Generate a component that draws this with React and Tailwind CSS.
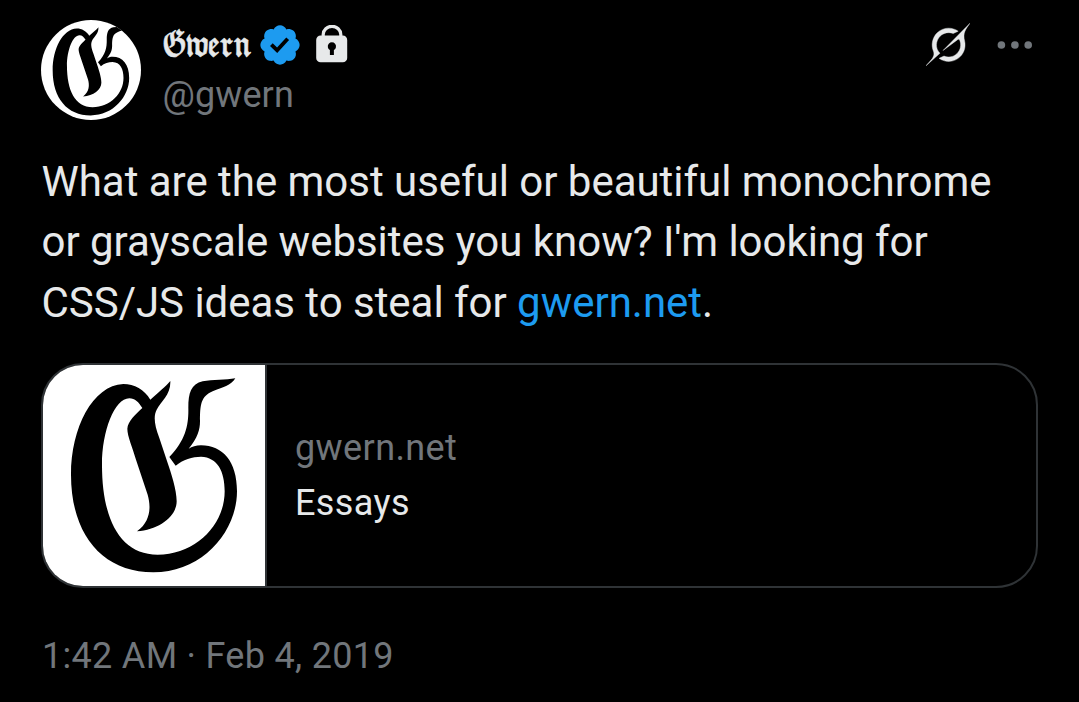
const G_PATH =
  "M343 125C325 95 295 78 262 78C170 82 105 210 105 350C105 530 200 643 352 643C500 643 603 520 603 400C603 310 560 262 495 262C480 262 468 266 458 272C485 240 492 215 492 190C492 140 495 115 530 100C560 88 585 82 598 61C570 67 530 64 500 70C465 78 457 105 457 150C458 200 450 245 400 297L419 323C440 305 470 296 495 296C545 298 566 340 566 400C566 500 480 590 365 590C250 590 198 480 198 320C198 220 235 121 280 121C297 121 308 133 319 150C300 168 275 190 274 212C274 235 290 270 300 305L335 410C345 445 345 490 303 520C370 515 422 475 422 430C422 395 405 345 395 315L370 240C355 200 352 175 362 155C375 130 405 110 403 69C390 85 365 105 343 125Z";

function GothicG({ viewBox, className }) {
  return (
    <svg viewBox={viewBox} className={className} preserveAspectRatio="none" aria-hidden="true">
      <path d={G_PATH} fill="#000" />
    </svg>
  );
}

function Verified() {
  return (
    <svg viewBox="0 0 22 22" className="size-[46px] shrink-0" fill="#1d9bf0" aria-hidden="true">
      <path d="M20.396 11c-.018-.646-.215-1.275-.57-1.816-.354-.54-.852-.972-1.438-1.246.223-.607.27-1.264.14-1.897-.131-.634-.437-1.218-.882-1.687-.47-.445-1.053-.75-1.687-.882-.633-.13-1.29-.083-1.897.14-.273-.587-.704-1.086-1.245-1.44S11.647 1.62 11 1.604c-.646.017-1.273.213-1.813.568s-.969.854-1.24 1.44c-.608-.223-1.267-.272-1.902-.14-.635.13-1.22.436-1.69.882-.445.47-.749 1.055-.878 1.688-.13.633-.08 1.29.144 1.896-.587.274-1.087.705-1.443 1.245-.356.54-.555 1.17-.574 1.817.02.647.218 1.276.574 1.817.356.54.856.972 1.443 1.245-.224.606-.274 1.263-.144 1.896.13.634.433 1.218.877 1.688.47.443 1.054.747 1.687.878.633.132 1.29.084 1.897-.136.274.586.705 1.084 1.246 1.439.54.354 1.17.551 1.816.569.647-.016 1.276-.213 1.817-.567s.972-.854 1.245-1.44c.604.239 1.266.296 1.903.164.636-.132 1.22-.447 1.68-.907.46-.46.776-1.044.908-1.681s.075-1.299-.165-1.903c.586-.274 1.084-.705 1.439-1.246.354-.54.551-1.17.569-1.816zM9.662 14.85l-3.429-3.428 1.293-1.302 2.072 2.072 4.4-4.794 1.347 1.246z" />
    </svg>
  );
}

function Lock() {
  return (
    <svg viewBox="0 0 32 38" className="ml-[13px] mb-[2px] h-[38px] w-8 shrink-0" aria-hidden="true">
      <path d="M7.2 12V9.5a8.8 8.2 0 0 1 17.6 0V12" fill="none" stroke="#e7e9ea" strokeWidth="3.2" />
      <path
        fillRule="evenodd"
        fill="#e7e9ea"
        d="M4.6 10.5h22.2a4.4 4.4 0 0 1 4.4 4.4v18a4.4 4.4 0 0 1-4.4 4.4H4.6a4.4 4.4 0 0 1-4.4-4.4v-18a4.4 4.4 0 0 1 4.4-4.4zM13.9 25V30h4v-5a4.1 4.1 0 1 0-4 0z"
      />
    </svg>
  );
}

function Grok() {
  return (
    <svg viewBox="0 0 33 32" className="h-[43px] w-[44px]" fill="#e7e9ea" stroke="#e7e9ea" strokeWidth="0.3" aria-hidden="true">
      <path d="M12.745 20.54l10.97-8.19c.539-.4 1.307-.244 1.564.38 1.349 3.288.746 7.241-1.938 9.955-2.683 2.714-6.417 3.31-9.83 1.954l-3.728 1.745c5.347 3.697 11.84 2.782 15.898-1.324 3.219-3.255 4.216-7.692 3.284-11.693l.008.009c-1.351-5.878.332-8.227 3.782-13.031L33 0l-4.54 4.59v-.014L12.743 20.544m-2.263 1.987c-3.837-3.707-3.175-9.446.1-12.755 2.42-2.449 6.388-3.448 9.852-1.979l3.72-1.737c-.67-.49-1.53-1.017-2.515-1.387-4.455-1.854-9.789-.931-13.41 2.728-3.483 3.523-4.579 8.94-2.697 13.561 1.405 3.454-.899 5.898-3.22 8.364C1.49 30.2.666 31.074 0 32l10.478-9.466" />
    </svg>
  );
}

function Dots() {
  return (
    <svg viewBox="0 0 36 8" className="h-2 w-9" fill="#71767b" aria-hidden="true">
      <circle cx="4.4" cy="4" r="3.8" />
      <circle cx="17.9" cy="4" r="3.8" />
      <circle cx="31.2" cy="4" r="3.8" />
    </svg>
  );
}

export default function App() {
  return (
    <article className="h-[702px] w-[1079px] overflow-hidden bg-black pl-[41px] pr-[41px] pt-5 font-['Roboto',sans-serif] text-[#e7e9ea]">
      <header className="flex h-[100px]">
        <div className="size-[100px] shrink-0 overflow-hidden rounded-full bg-white">
          <GothicG viewBox="29 22 651 651" className="size-full" />
        </div>
        <div className="ml-[21.5px] flex flex-col">
          <div className="flex h-[49px] items-center">
            <span className="-ml-px mr-px w-[94px] origin-left scale-x-[0.71] whitespace-nowrap pt-[3px] font-['DejaVu_Math_TeX_Gyre','DejaVu_Sans',serif] text-[34px] leading-[48px] tracking-[-3px] [-webkit-text-stroke:0.7px_#e7e9ea]">𝕲𝖜𝖊𝖗𝖓</span>
            <Verified />
            <Lock />
          </div>
          <div className="text-[36px] leading-[52px] tracking-[0.1px] text-[#71767b]">@gwern</div>
        </div>
        <div className="ml-auto flex h-[49px] items-center gap-[27px] pr-[5px]">
          <Grok />
          <Dots />
        </div>
      </header>

      <p className="mt-[31.7px] whitespace-nowrap pl-[0.5px] text-[42px] leading-[60.5px] tracking-[-0.025px]">
        What are the most useful or beautiful monochrome
        <br />
        or grayscale websites you know? I'm looking for
        <br />
        CSS/JS ideas to steal for <span className="text-[#1d9bf0]">gwern.net</span>.
      </p>

      <div className="mt-[29.8px] flex h-[225px] w-[997px] overflow-hidden rounded-[42px] border-2 border-[#2f3336]">
        <div className="w-[224px] shrink-0 border-r-2 border-[#2f3336] bg-white">
          <GothicG viewBox="21 21 666 663" className="size-full" />
        </div>
        <div className="flex flex-col justify-center pl-[28px] pt-px text-[36px] leading-[55px] tracking-[0.4px]">
          <span className="text-[#71767b]">gwern.net</span>
          <span>Essays</span>
        </div>
      </div>

      <div className="mt-[43.5px] pl-px text-[36px] leading-[50px] tracking-[0.3px] text-[#71767b]">1:42 AM · Feb 4, 2019</div>
    </article>
  );
}
